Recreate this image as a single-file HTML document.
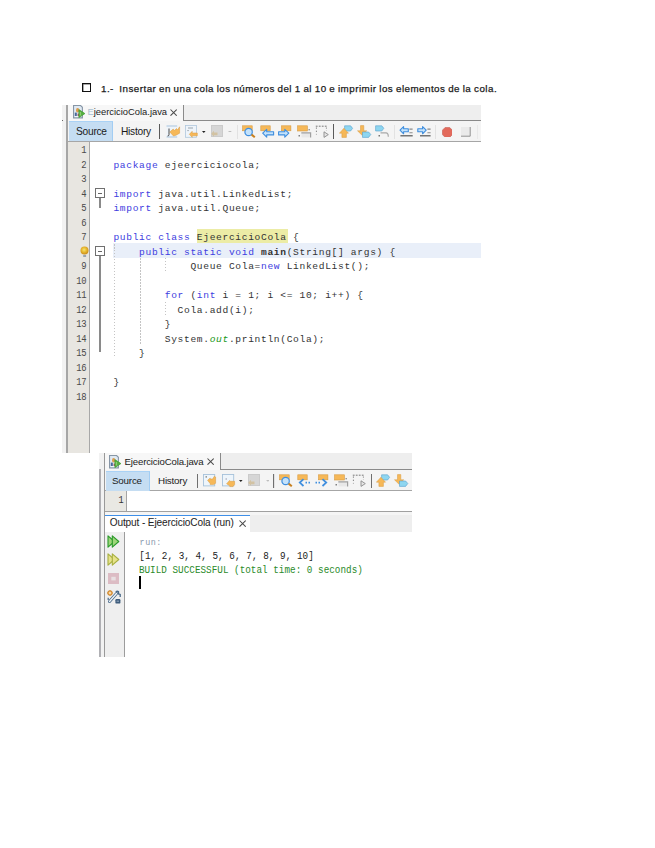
<!DOCTYPE html>
<html><head><meta charset="utf-8">
<style>
html,body{margin:0;padding:0;background:#fff;}
body{width:655px;height:848px;position:relative;overflow:hidden;font-family:"Liberation Sans",sans-serif;}
.a{position:absolute;}
.mono{font-family:"Liberation Mono",monospace;white-space:pre;}
.ui{font-family:"Liberation Sans",sans-serif;white-space:nowrap;}
.code{font-size:9.6px;letter-spacing:0.66px;line-height:14.5px;color:#333;}
.ln{font-size:10.8px;line-height:14.5px;color:#4a4a4a;text-align:right;letter-spacing:-0.4px;transform:scaleX(0.82);transform-origin:100% 0;}
.kw{color:#4040e0;}
.hl{background:#ececa4;}
.gr{color:#189818;}
</style></head><body>
<div class="a" style="left:82px;top:83px;width:7px;height:7px;border:1px solid #111;box-shadow:inset 0.3px 0.3px 0 0.2px #555;"></div>
<div class="a head" style="left:101px;top:82px;font-size:9.8px;line-height:14px;color:#1a1a1a;white-space:nowrap;letter-spacing:0.47px;word-spacing:-0.45px;-webkit-text-stroke:0.25px #1a1a1a;">1.-&nbsp; Insertar en una cola los números del 1 al 10 e imprimir los elementos de la cola.</div>
<div class="a" style="left:62.3px;top:105px;width:3.7px;height:347.5px;background:#f2f2f2;"></div>
<div class="a" style="left:62px;top:120px;width:1px;height:1px;background:#666;"></div>
<div class="a" style="left:66px;top:105px;width:2px;height:347.5px;background:#a6a6a6;"></div>
<div class="a" style="left:68px;top:105px;width:413px;height:15px;background:#eeeeee;border-bottom:1px solid #8a8a8a;"></div>
<div class="a" style="left:68px;top:105px;width:115px;height:16px;background:#f7f7f7;border-right:1px solid #8a8a8a;"></div>
<div class="a" style="left:68px;top:121px;width:413px;height:19.6px;background:#f4f4f4;border-bottom:1.4px solid #a6a6a6;"></div>
<div class="a" style="left:69.4px;top:121px;width:43px;height:19px;background:#c5ddf2;border-right:1.2px solid #a2cdf3;border-top:0.6px solid #aad2f5;"></div>
<div class="a" style="left:68px;top:142px;width:20.7px;height:310.5px;background:#e8e6e1;border-right:1.5px solid #a8a8a8;"></div>
<div class="a" style="left:113px;top:243px;width:368px;height:14.7px;background:#e9eff9;"></div>
<div class="a" style="left:197px;top:229px;width:91px;height:13.5px;background:#ececa6;"></div>
<div class="a ui" style="left:87.5px;top:106px;font-size:9.4px;line-height:12px;color:#222;white-space:nowrap;letter-spacing:-0.01px;"><span style="color:#a8c0d0;-webkit-text-stroke:0">E</span>jeercicioCola.java</div>
<svg class="a" style="left:170.2px;top:108.5px;" width="7.2" height="7.2" viewBox="0 0 7.2 7.2"><path d="M0.5 0.5 L6.7 6.7 M6.7 0.5 L0.5 6.7" stroke="#4a4a4a" stroke-width="1.05"/></svg>
<div class="a ui" style="left:76px;top:125.1px;font-size:10.2px;line-height:14px;color:#1a1a1a;letter-spacing:-0.25px;">Source</div>
<div class="a ui" style="left:121px;top:125.1px;font-size:10.2px;line-height:14px;color:#1a1a1a;letter-spacing:-0.25px;">History</div>
<div class="a" style="left:159.2px;top:124px;width:1.3px;height:14.6px;background:#5a5a5a;"></div>
<div class="a" style="left:332.9px;top:124px;width:1.3px;height:14.6px;background:#5a5a5a;"></div>
<svg class="a" style="left:165.5px;top:124.5px;" width="15.0" height="13.0" viewBox="0 0 15 13"><rect x="0.5" y="0.5" width="10.7" height="11.8" fill="#eef4fa"/><path d="M0.5 1H11.2M0.5 12H11.2" stroke="#a9c4dc" stroke-width="1"/><path d="M3 3.5 V9.5 Q3 11 1.6 11" stroke="#333" stroke-width="0.9" fill="none"/><path d="M3.8 7 L7.2 4 L8.5 5.5 L10.5 3.5 L11.5 5 L13.6 1.8 L13.6 8.2 L10 10.2 L7.5 11 Z" fill="#f6b858" stroke="#d89a40" stroke-width="0.5"/></svg>
<svg class="a" style="left:184.5px;top:124.5px;" width="13.0" height="13.0" viewBox="0 0 13 13"><rect x="0.5" y="0.5" width="11" height="11.8" fill="#eef4fa" stroke="#b0c8dc" stroke-width="0.8"/><path d="M3 3H8M2.3 5.6H3.8" stroke="#9aa4ac" stroke-width="1"/><path d="M4.3 9.3 L7.2 6.3 V8 H12.3 V10.8 H7.2 V12.3 Z" fill="#f6b858" stroke="#d89a40" stroke-width="0.5"/></svg>
<svg class="a" style="left:201.6px;top:130.6px;" width="4.0" height="2.2" viewBox="0 0 4 2.2"><path d="M0 0H3.6L1.8 2Z" fill="#222"/></svg>
<svg class="a" style="left:210.9px;top:124.9px;" width="12.0" height="12.0" viewBox="0 0 12 12"><rect x="0" y="0" width="12" height="12" fill="#cbcbcb"/><rect x="1" y="1" width="10" height="10" fill="#d6d6d6"/><path d="M0.2 8.7 L3 5.8 V7.4 H6.5 V10.2 H3 V11.8 Z" fill="#d2c2a2"/></svg>
<svg class="a" style="left:228.3px;top:130.7px;" width="3.8" height="1.8" viewBox="0 0 3.8 1.8"><path d="M0 0H3.8L1.9 1.8Z" fill="#bdbdbd"/></svg>
<svg class="a" style="left:236.8px;top:124.5px;" width="1.0" height="14.0" viewBox="0 0 1 14"><rect width="1" height="14" fill="#e2e2e2"/></svg>
<svg class="a" style="left:241.5px;top:124.5px;" width="14.0" height="13.0" viewBox="0 0 14 13"><rect x="0.6" y="0.8" width="9.6" height="5" fill="#f6b858" stroke="#d89a40" stroke-width="0.6"/><circle cx="6.6" cy="7" r="3.7" fill="#c4e2fb" stroke="#3f8ede" stroke-width="1.2"/><path d="M9.6 9.6 L12.8 12.2" stroke="#c88020" stroke-width="2"/></svg>
<svg class="a" style="left:259.5px;top:124.5px;" width="15.0" height="13.0" viewBox="0 0 15 13"><rect x="0.8" y="0.8" width="9.4" height="5" fill="#f6b858" stroke="#d89a40" stroke-width="0.6"/><path d="M2.7 8.2 L6.7 4.4 V6.7 H13.6 V9.9 H6.7 V12.2 Z" fill="#c4e2fb" stroke="#3f8ede" stroke-width="1.1" stroke-linejoin="round"/></svg>
<svg class="a" style="left:277.8px;top:124.5px;" width="15.0" height="13.0" viewBox="0 0 15 13"><rect x="3.5" y="0.8" width="9.4" height="5" fill="#f6b858" stroke="#d89a40" stroke-width="0.6"/><path d="M10.8 8.2 L6.8 4.4 V6.7 H0.6 V9.9 H6.8 V12.2 Z" fill="#c4e2fb" stroke="#3f8ede" stroke-width="1.1" stroke-linejoin="round"/></svg>
<svg class="a" style="left:296.8px;top:124.5px;" width="15.0" height="13.0" viewBox="0 0 15 13"><rect x="0.6" y="0.8" width="9.8" height="5.2" fill="#f6b858" stroke="#d89a40" stroke-width="0.6"/><rect x="4.5" y="8" width="9" height="4.4" fill="#e8e8e8"/><path d="M4.3 7.8 H13.6 V12.4" stroke="#a0a0a0" stroke-width="1.2" fill="none"/><rect x="1.6" y="10.2" width="1.2" height="1.2" fill="#444"/><rect x="11.6" y="4.2" width="1.1" height="1.1" fill="#555"/></svg>
<svg class="a" style="left:314.8px;top:124.5px;" width="15.0" height="13.0" viewBox="0 0 15 13"><path d="M0.8 1.2 H12.5" stroke="#777" stroke-width="1" stroke-dasharray="1.8 1.2" fill="none"/><path d="M1.4 2.5 V9.5" stroke="#777" stroke-width="1" stroke-dasharray="1.2 2" fill="none"/><path d="M11.4 2.5 V6" stroke="#888" stroke-width="1" stroke-dasharray="1.2 2" fill="none"/><path d="M9 6.8 L13.3 9.6 L9 12.4 Z" fill="#e6e6e6" stroke="#8a8a8a" stroke-width="0.9"/></svg>
<svg class="a" style="left:338.5px;top:124.5px;" width="15.0" height="13.0" viewBox="0 0 15 13"><path d="M5.6 0.8 H11.6 L13.6 3.3 L11.6 6 H5.6 Z" fill="#8ed6f0" stroke="#58a0cc" stroke-width="0.6"/><path d="M4.9 3.3 L9.5 8.2 H7.4 V12.4 H2.9 V8.2 H0.4 Z" fill="#f6b858" stroke="#d89a40" stroke-width="0.5"/></svg>
<svg class="a" style="left:356.5px;top:124.5px;" width="15.0" height="13.0" viewBox="0 0 15 13"><path d="M3.5 0.6 H6.8 V5.8 H9.7 L5.1 10.3 L0.5 5.8 H3.5 Z" fill="#f6b858" stroke="#d89a40" stroke-width="0.5"/><path d="M5.5 7 H11.6 L13.8 9.5 L11.6 12.4 H5.5 Z" fill="#8ed6f0" stroke="#58a0cc" stroke-width="0.6"/></svg>
<svg class="a" style="left:375.2px;top:124.5px;" width="15.0" height="13.0" viewBox="0 0 15 13"><path d="M0.6 0.8 H6.8 L8.8 3.3 L6.8 6 H0.6 Z" fill="#8ed6f0" stroke="#58a0cc" stroke-width="0.6"/><path d="M5.5 7.9 H11 Q13.3 7.9 13.3 11.8" stroke="#a8a8a8" stroke-width="1.2" fill="none"/><rect x="3.6" y="10.2" width="1.2" height="1.2" fill="#333"/></svg>
<svg class="a" style="left:393.5px;top:124.5px;" width="1.0" height="14.0" viewBox="0 0 1 14"><rect width="1" height="14" fill="#e2e2e2"/></svg>
<svg class="a" style="left:398.5px;top:124.5px;" width="15.0" height="13.0" viewBox="0 0 15 13"><path d="M1 5.2 L4.6 1.6 V3.7 H9.3 V6.8 H4.6 V8.8 Z" fill="#c4e2fb" stroke="#3f8ede" stroke-width="1.1" stroke-linejoin="round"/><path d="M10.4 4.1H13.6M10.4 7.8H13.6" stroke="#8a8a8a" stroke-width="1.1"/><path d="M1.4 10.8H13.7" stroke="#555" stroke-width="1.2"/></svg>
<svg class="a" style="left:416.8px;top:124.5px;" width="15.0" height="13.0" viewBox="0 0 15 13"><path d="M9.2 5.2 L5.6 1.6 V3.7 H0.8 V6.8 H5.6 V8.8 Z" fill="#c4e2fb" stroke="#3f8ede" stroke-width="1.1" stroke-linejoin="round"/><path d="M10.4 4.1H13.6M10.4 7.8H13.6" stroke="#8a8a8a" stroke-width="1.1"/><path d="M3 10.8H13.6" stroke="#555" stroke-width="1.2"/></svg>
<svg class="a" style="left:435.3px;top:124.5px;" width="1.0" height="14.0" viewBox="0 0 1 14"><rect width="1" height="14" fill="#e2e2e2"/></svg>
<svg class="a" style="left:441.6px;top:126.6px;" width="10.8" height="10.8" viewBox="0 0 10.8 10.8"><path d="M3.2 0.4 H7.6 L10.4 3.2 V7.6 L7.6 10.4 H3.2 L0.4 7.6 V3.2 Z" fill="#e36a5c" stroke="#c45a50" stroke-width="0.6"/></svg>
<svg class="a" style="left:461.0px;top:127.3px;" width="10.0" height="10.0" viewBox="0 0 10 10"><rect x="0" y="0" width="9.5" height="9.5" fill="#eaeaea"/><path d="M0 9.2 H9.2 V0" stroke="#8a8a8a" stroke-width="0.9" fill="none"/></svg>
<svg class="a" style="left:476.5px;top:124.5px;" width="1.0" height="14.0" viewBox="0 0 1 14"><rect width="1" height="14" fill="#e9e9e9"/></svg>
<svg class="a" style="left:72.5px;top:105.4px;" width="14" height="14" viewBox="0 0 14 14"><path d="M0.55 0.55 H7.6 L9.4 2.3 V12.9 H0.55 Z" fill="#dfe9f3" stroke="#8796a6" stroke-width="1.1"/><path d="M1.8 11.6 H8" stroke="#f6f8fa" stroke-width="0.8"/><ellipse cx="4.6" cy="5.2" rx="1.6" ry="2.2" fill="#dc9c50"/><rect x="1.8" y="7.6" width="2" height="3.4" fill="#4a6a9a"/><rect x="4.6" y="8.6" width="1.5" height="2.4" fill="#b04a6a"/><path d="M5.9 4.6 L11.9 8.6 L5.9 12.6 Z" fill="#58b040" stroke="#3a9a2a" stroke-width="0.7" stroke-linejoin="round"/><path d="M7.3 7 V10.5" stroke="#a8dc90" stroke-width="0.8"/></svg>
<div class="a" style="left:95px;top:188.2px;width:7.8px;height:7.8px;background:#fff;border:1px solid #707070;"></div>
<div class="a" style="left:98px;top:192.8px;width:3.8px;height:1.2px;background:#666;"></div>
<div class="a" style="left:99.3px;top:198px;width:1.5px;height:9.5px;background:#8a8a8a;"></div>
<div class="a" style="left:95px;top:246.3px;width:7.8px;height:7.8px;background:#fff;border:1px solid #707070;"></div>
<div class="a" style="left:98px;top:250.8px;width:3.8px;height:1.2px;background:#666;"></div>
<div class="a" style="left:99.3px;top:256px;width:1.5px;height:96px;background:#8a8a8a;"></div>
<svg class="a" style="left:79.5px;top:245.5px;" width="9" height="12" viewBox="0 0 9 12"><defs><radialGradient id="bg" cx="0.45" cy="0.4" r="0.6"><stop offset="0" stop-color="#f4e470"/><stop offset="0.5" stop-color="#e8b830"/><stop offset="1" stop-color="#c88a18"/></radialGradient></defs><circle cx="4.5" cy="4.6" r="4" fill="url(#bg)"/><rect x="3.2" y="9" width="2.9" height="2" fill="#9aa4b0"/></svg>
<div class="a" style="left:113.5px;top:243.5px;width:1px;height:114.5px;background:repeating-linear-gradient(#c4c4c4 0 1.5px,transparent 1.5px 3px);"></div>
<div class="a" style="left:139.5px;top:258px;width:1px;height:86px;background:repeating-linear-gradient(#c4c4c4 0 1.5px,transparent 1.5px 3px);"></div>
<div class="a" style="left:165.2px;top:258px;width:1px;height:14px;background:repeating-linear-gradient(#c4c4c4 0 1.5px,transparent 1.5px 3px);"></div>
<div class="a" style="left:165.2px;top:302px;width:1px;height:14px;background:repeating-linear-gradient(#c4c4c4 0 1.5px,transparent 1.5px 3px);"></div>
<div class="a mono ln" style="left:66px;top:143.35px;width:20.3px;">1</div>
<div class="a mono ln" style="left:66px;top:157.85px;width:20.3px;">2</div>
<div class="a mono code" style="left:113.4px;top:158.54999999999998px;"><span class="kw">package</span> ejeerciciocola;</div>
<div class="a mono ln" style="left:66px;top:172.35px;width:20.3px;">3</div>
<div class="a mono ln" style="left:66px;top:186.85px;width:20.3px;">4</div>
<div class="a mono code" style="left:113.4px;top:187.54999999999998px;"><span class="kw">import</span> java.util.LinkedList;</div>
<div class="a mono ln" style="left:66px;top:201.35px;width:20.3px;">5</div>
<div class="a mono code" style="left:113.4px;top:202.04999999999998px;"><span class="kw">import</span> java.util.Queue;</div>
<div class="a mono ln" style="left:66px;top:215.85px;width:20.3px;">6</div>
<div class="a mono ln" style="left:66px;top:230.35px;width:20.3px;">7</div>
<div class="a mono code" style="left:113.4px;top:231.04999999999998px;"><span class="kw">public</span> <span class="kw">class</span> EjeercicioCola {</div>
<div class="a mono code" style="left:113.4px;top:245.54999999999998px;">    <span class="kw">public</span> <span class="kw">static</span> <span class="kw">void</span> <b>main</b>(String[] args) {</div>
<div class="a mono ln" style="left:66px;top:259.35px;width:20.3px;">9</div>
<div class="a mono code" style="left:113.4px;top:260.05px;">            Queue Cola=<span class="kw">new</span> LinkedList();</div>
<div class="a mono ln" style="left:66px;top:273.85px;width:20.3px;">10</div>
<div class="a mono ln" style="left:66px;top:288.35px;width:20.3px;">11</div>
<div class="a mono code" style="left:113.4px;top:289.05px;">        <span class="kw">for</span> (<span class="kw">int</span> i = 1; i &lt;= 10; i++) {</div>
<div class="a mono ln" style="left:66px;top:302.85px;width:20.3px;">12</div>
<div class="a mono code" style="left:113.4px;top:303.55px;">          Cola.add(i);</div>
<div class="a mono ln" style="left:66px;top:317.35px;width:20.3px;">13</div>
<div class="a mono code" style="left:113.4px;top:318.05px;">        }</div>
<div class="a mono ln" style="left:66px;top:331.85px;width:20.3px;">14</div>
<div class="a mono code" style="left:113.4px;top:332.55px;">        System.<i class="gr">out</i>.println(Cola);</div>
<div class="a mono ln" style="left:66px;top:346.35px;width:20.3px;">15</div>
<div class="a mono code" style="left:113.4px;top:347.05px;">    }</div>
<div class="a mono ln" style="left:66px;top:360.85px;width:20.3px;">16</div>
<div class="a mono ln" style="left:66px;top:375.35px;width:20.3px;">17</div>
<div class="a mono code" style="left:113.4px;top:376.05px;">}</div>
<div class="a mono ln" style="left:66px;top:389.85px;width:20.3px;">18</div>
<div class="a" style="left:98.9px;top:452.6px;width:5px;height:204.4px;background:#f2f2f2;"></div>
<div class="a" style="left:99.1px;top:469px;width:1.9px;height:188px;background:#b0b0b4;"></div>
<div class="a" style="left:103.8px;top:452.6px;width:1.4px;height:204.4px;background:#999;"></div>
<div class="a" style="left:105.2px;top:453px;width:306.8px;height:16px;background:#eeeeee;border-bottom:1px solid #8a8a8a;"></div>
<div class="a" style="left:105.2px;top:453px;width:114.6px;height:17px;background:#f7f7f7;border-right:1px solid #8a8a8a;"></div>
<div class="a" style="left:105.2px;top:470px;width:306.8px;height:19.7px;background:#f4f4f4;border-bottom:1.1px solid #a6a6a6;"></div>
<div class="a" style="left:106px;top:471px;width:43.4px;height:18.9px;background:#c5ddf2;border-right:1.2px solid #a2cdf3;border-top:0.6px solid #aad2f5;"></div>
<div class="a" style="left:105.2px;top:490.8px;width:21px;height:19.8px;background:#e9e8e3;border-right:1.1px solid #a4a4a4;"></div>
<div class="a" style="left:105.2px;top:510.6px;width:306.8px;height:1.1px;background:#a0a0a0;"></div>
<div class="a" style="left:105.2px;top:511.7px;width:306.8px;height:20px;background:#eeeeee;"></div>
<div class="a" style="left:105.2px;top:511.7px;width:306.8px;height:3.1px;background:#f5f5f5;"></div>
<div class="a" style="left:105.2px;top:514.8px;width:145.3px;height:16.9px;background:#fff;border-top:1.1px solid #3f8fe8;"></div>
<div class="a" style="left:105.2px;top:531.7px;width:18.9px;height:125.3px;background:#efefef;border-right:1.2px solid #9c9c9c;"></div>
<svg class="a" style="left:108.7px;top:454.5px;" width="14" height="14" viewBox="0 0 14 14"><path d="M0.55 0.55 H7.6 L9.4 2.3 V12.9 H0.55 Z" fill="#dfe9f3" stroke="#8796a6" stroke-width="1.1"/><path d="M1.8 11.6 H8" stroke="#f6f8fa" stroke-width="0.8"/><ellipse cx="4.6" cy="5.2" rx="1.6" ry="2.2" fill="#dc9c50"/><rect x="1.8" y="7.6" width="2" height="3.4" fill="#4a6a9a"/><rect x="4.6" y="8.6" width="1.5" height="2.4" fill="#b04a6a"/><path d="M5.9 4.6 L11.9 8.6 L5.9 12.6 Z" fill="#58b040" stroke="#3a9a2a" stroke-width="0.7" stroke-linejoin="round"/><path d="M7.3 7 V10.5" stroke="#a8dc90" stroke-width="0.8"/></svg>
<div class="a ui" style="left:124.5px;top:456px;font-size:9.6px;line-height:12px;color:#222;white-space:nowrap;letter-spacing:-0.14px;">EjeercicioCola.java</div>
<svg class="a" style="left:207px;top:457.5px;" width="7.2" height="7.2" viewBox="0 0 7.2 7.2"><path d="M0.5 0.5 L6.7 6.7 M6.7 0.5 L0.5 6.7" stroke="#4a4a4a" stroke-width="1.05"/></svg>
<div class="a ui" style="left:112px;top:474px;font-size:9.8px;line-height:14px;color:#222;letter-spacing:-0.2px;">Source</div>
<div class="a ui" style="left:158px;top:474px;font-size:9.8px;line-height:14px;color:#222;letter-spacing:-0.2px;">History</div>
<div class="a mono" style="left:105.2px;top:495.2px;width:18.5px;font-size:10px;line-height:12px;text-align:right;color:#333;transform:scaleX(0.85);transform-origin:100% 0;">1</div>
<div class="a ui" style="left:109.7px;top:516.3px;font-size:10.1px;line-height:13px;color:#222;white-space:nowrap;letter-spacing:-0.13px;">Output - EjeercicioCola (run)</div>
<svg class="a" style="left:239px;top:520px;" width="7.2" height="7.2" viewBox="0 0 7.2 7.2"><path d="M0.5 0.5 L6.7 6.7 M6.7 0.5 L0.5 6.7" stroke="#4a4a4a" stroke-width="1.05"/></svg>
<div class="a" style="left:196.9px;top:473.5px;width:1.3px;height:14.5px;background:#6f6f6f;"></div>
<div class="a" style="left:272.8px;top:473.5px;width:1.3px;height:14.5px;background:#6f6f6f;"></div>
<div class="a" style="left:370.5px;top:473.5px;width:1.3px;height:14.5px;background:#6f6f6f;"></div>
<svg class="a" style="left:202.7px;top:474.0px;" width="15.0" height="13.0" viewBox="0 0 15 13"><rect x="0.5" y="0.5" width="11.2" height="11.4" fill="#eef5fb" stroke="#a6c2da" stroke-width="0.9"/><rect x="2.6" y="2.3" width="1.2" height="1.2" fill="#555"/><path d="M4.6 6.3 L7.2 4 V5 H9.6 L11.4 2.2 L12.6 3 V9.3 L10.6 10.6 H7.2 V9.6 Z" fill="#f6b858" stroke="#d89a40" stroke-width="0.5"/></svg>
<svg class="a" style="left:221.7px;top:474.0px;" width="14.0" height="14.0" viewBox="0 0 14 14"><rect x="0.5" y="0.5" width="11.2" height="11.4" fill="#eef5fb" stroke="#a6c2da" stroke-width="0.9"/><path d="M3.5 5 H5" stroke="#99a" stroke-width="1"/><path d="M4.6 9.8 L7.6 6.4 L8.4 7.3 H12.6 V10.6 L11 12.6 H7.8 V11.8 Z" fill="#f6b858" stroke="#d89a40" stroke-width="0.5"/></svg>
<svg class="a" style="left:238.8px;top:480.1px;" width="4.0" height="2.2" viewBox="0 0 4 2.2"><path d="M0 0H3.6L1.8 2Z" fill="#222"/></svg>
<svg class="a" style="left:248.10000000000002px;top:474.4px;" width="12.0" height="12.0" viewBox="0 0 12 12"><rect x="0" y="0" width="12" height="12" fill="#cbcbcb"/><rect x="1" y="1" width="10" height="10" fill="#d6d6d6"/><path d="M0.2 8.7 L3 5.8 V7.4 H6.5 V10.2 H3 V11.8 Z" fill="#d2c2a2"/></svg>
<svg class="a" style="left:265.5px;top:480.2px;" width="3.8" height="1.8" viewBox="0 0 3.8 1.8"><path d="M0 0H3.8L1.9 1.8Z" fill="#bdbdbd"/></svg>
<svg class="a" style="left:274.0px;top:474.0px;" width="1.0" height="14.0" viewBox="0 0 1 14"><rect width="1" height="14" fill="#e2e2e2"/></svg>
<svg class="a" style="left:278.7px;top:474.0px;" width="14.0" height="13.0" viewBox="0 0 14 13"><rect x="0.6" y="0.8" width="9.6" height="5" fill="#f6b858" stroke="#d89a40" stroke-width="0.6"/><circle cx="6.6" cy="7" r="3.7" fill="#c4e2fb" stroke="#3f8ede" stroke-width="1.2"/><path d="M9.6 9.6 L12.8 12.2" stroke="#c88020" stroke-width="2"/></svg>
<svg class="a" style="left:296.7px;top:474.0px;" width="15.0" height="13.0" viewBox="0 0 15 13"><rect x="0.8" y="0.8" width="9.4" height="5" fill="#f6b858" stroke="#d89a40" stroke-width="0.6"/><path d="M6.5 5.2 L2.8 8.6 L6.5 12" stroke="#3f8ede" stroke-width="1.8" fill="none"/><path d="M8.5 8.6 H13.5" stroke="#3f8ede" stroke-width="1.6" stroke-dasharray="1.5 1.5"/></svg>
<svg class="a" style="left:315.0px;top:474.0px;" width="15.0" height="13.0" viewBox="0 0 15 13"><rect x="3.5" y="0.8" width="9.4" height="5" fill="#f6b858" stroke="#d89a40" stroke-width="0.6"/><path d="M7.5 5.2 L11.2 8.6 L7.5 12" stroke="#3f8ede" stroke-width="1.8" fill="none"/><path d="M0.5 8.6 H5.5" stroke="#3f8ede" stroke-width="1.6" stroke-dasharray="1.5 1.5"/></svg>
<svg class="a" style="left:334.0px;top:474.0px;" width="15.0" height="13.0" viewBox="0 0 15 13"><rect x="0.6" y="0.8" width="9.8" height="5.2" fill="#f6b858" stroke="#d89a40" stroke-width="0.6"/><rect x="4.5" y="8" width="9" height="4.4" fill="#e8e8e8"/><path d="M4.3 7.8 H13.6 V12.4" stroke="#a0a0a0" stroke-width="1.2" fill="none"/><rect x="1.6" y="10.2" width="1.2" height="1.2" fill="#444"/><rect x="11.6" y="4.2" width="1.1" height="1.1" fill="#555"/></svg>
<svg class="a" style="left:352.0px;top:474.0px;" width="15.0" height="13.0" viewBox="0 0 15 13"><path d="M0.8 1.2 H12.5" stroke="#777" stroke-width="1" stroke-dasharray="1.8 1.2" fill="none"/><path d="M1.4 2.5 V9.5" stroke="#777" stroke-width="1" stroke-dasharray="1.2 2" fill="none"/><path d="M11.4 2.5 V6" stroke="#888" stroke-width="1" stroke-dasharray="1.2 2" fill="none"/><path d="M9 6.8 L13.3 9.6 L9 12.4 Z" fill="#e6e6e6" stroke="#8a8a8a" stroke-width="0.9"/></svg>
<svg class="a" style="left:375.7px;top:474.0px;" width="15.0" height="13.0" viewBox="0 0 15 13"><path d="M5.6 0.8 H11.6 L13.6 3.3 L11.6 6 H5.6 Z" fill="#8ed6f0" stroke="#58a0cc" stroke-width="0.6"/><path d="M4.9 3.3 L9.5 8.2 H7.4 V12.4 H2.9 V8.2 H0.4 Z" fill="#f6b858" stroke="#d89a40" stroke-width="0.5"/></svg>
<svg class="a" style="left:393.7px;top:474.0px;" width="15.0" height="13.0" viewBox="0 0 15 13"><path d="M3.5 0.6 H6.8 V5.8 H9.7 L5.1 10.3 L0.5 5.8 H3.5 Z" fill="#f6b858" stroke="#d89a40" stroke-width="0.5"/><path d="M5.5 7 H11.6 L13.8 9.5 L11.6 12.4 H5.5 Z" fill="#8ed6f0" stroke="#58a0cc" stroke-width="0.6"/></svg>
<svg class="a" style="left:106.5px;top:534.5px;" width="13" height="13" viewBox="0 0 13 13"><path d="M1 0.8 L7.5 6.5 L1 12.2 Z" fill="#9ed67a" stroke="#2a9a2a" stroke-width="1.1" stroke-linejoin="round"/><path d="M5.3 0.8 L11.8 6.5 L5.3 12.2 Z" fill="#9ed67a" stroke="#2a9a2a" stroke-width="1.1" stroke-linejoin="round"/></svg>
<svg class="a" style="left:106.5px;top:553px;" width="13" height="13" viewBox="0 0 13 13"><path d="M1 0.8 L7.5 6.5 L1 12.2 Z" fill="#e6e28a" stroke="#a8b040" stroke-width="1.1" stroke-linejoin="round"/><path d="M5.3 0.8 L11.8 6.5 L5.3 12.2 Z" fill="#e6e28a" stroke="#a8b040" stroke-width="1.1" stroke-linejoin="round"/></svg>
<svg class="a" style="left:108px;top:572.8px;" width="11" height="11" viewBox="0 0 11 11"><rect x="0" y="0" width="11" height="11" fill="#dcbcc4"/><rect x="3.3" y="3.8" width="4.4" height="3.6" fill="#e8e0e2"/></svg>
<svg class="a" style="left:106.5px;top:589.5px;" width="14" height="14" viewBox="0 0 14 14"><circle cx="3" cy="3" r="2.3" fill="#f0b860" stroke="#c87a20" stroke-width="1"/><circle cx="3" cy="3" r="0.8" fill="#fff"/><path d="M2.5 11.5 L9.5 3.5" stroke="#4a6a8a" stroke-width="3" stroke-linecap="round"/><path d="M2.5 11.5 L9.5 3.5" stroke="#eef4f8" stroke-width="1.4" stroke-linecap="round"/><path d="M8.8 2 Q10 0.8 11.5 1.6 L11.6 4 L13.2 4.4 V7" stroke="#4a6a8a" stroke-width="1.3" fill="none"/><path d="M1.2 7.8 V10" stroke="#4a6a8a" stroke-width="1.2"/><rect x="8.4" y="9" width="5" height="4.6" rx="1.2" fill="#3e5c7c"/><rect x="9.6" y="10.6" width="2.4" height="1.2" fill="#8aa0b8"/></svg>
<div class="a mono" style="left:139.6px;top:536.9px;font-size:8.4px;line-height:12px;color:#8a9aae;letter-spacing:0.55px;">run:</div>
<div class="a mono" style="left:139.3px;top:549.8px;font-size:9.3px;line-height:12px;color:#222;transform:scaleY(1.13);transform-origin:0 0;letter-spacing:0.05px;">[1, 2, 3, 4, 5, 6, 7, 8, 9, 10]</div>
<div class="a mono" style="left:138.9px;top:564px;font-size:9.3px;line-height:12px;color:#2a8a2a;transform:scaleY(1.13);transform-origin:0 0;letter-spacing:0.02px;">BUILD SUCCESSFUL (total time: 0 seconds)</div>
<div class="a" style="left:139.4px;top:576px;width:1.8px;height:13.4px;background:#000;"></div>
</body></html>
